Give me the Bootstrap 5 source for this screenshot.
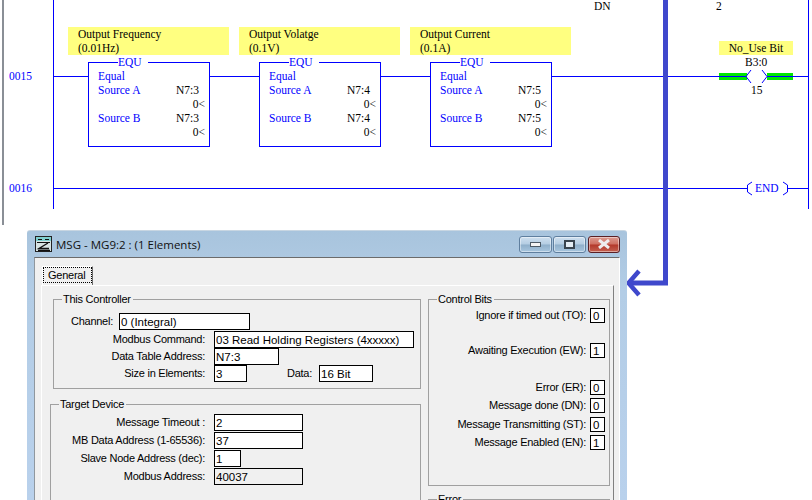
<!DOCTYPE html>
<html lang="en">
<head>
  <meta charset="UTF-8" />
  <meta name="viewport" content="width=device-width, initial-scale=1" />
  <title>MSG - MG9:2</title>
  <link href="https://cdn.jsdelivr.net/npm/bootstrap@5.3.3/dist/css/bootstrap.min.css" rel="stylesheet">
  <style>
    html, body {
      height: 500px;
      overflow: hidden;
      background-color: #fff;
    }
    /* ladder canvas */
    .ladder {
      position: relative;
      width: 812px;
      height: 500px;
      overflow: hidden;
      font-family: "Liberation Serif", serif;
      font-size: 11.5px;
      line-height: 14px;
      color: #000;
    }
    .ladder > * { position: absolute; }
    .side-bar { left: 2px; top: 0; width: 2px; height: 225px; background-color: #8a8f96; }
    .wires { left: 0; top: 0; }
    .rung-no { left: 9px; color: #0000ff; }
    .note { top: 27px; height: 28px; width: 161px; padding-left: 10px; background-color: #ffff80; }
    .eq-box {
      top: 62px;
      width: 122px;
      height: 85px;
      border: 1px solid #0000ff;
      background-color: #fff;
      color: #0000ff;
      padding: 6px 4px 0 9px;
    }
    .eq-title {
      position: absolute;
      top: -8px;
      left: 29px;
      width: 30px;
      background-color: #fff;
    }
    .eq-line { height: 14px; }
    .eq-addr { color: #000; width: 29px; }
    .eq-val { color: #000; text-align: right; }
    .plain-text { color: #000; white-space: nowrap; }
    .coil-note { left: 719px; top: 41px; width: 74px; height: 14px; background-color: #ffff80; text-align: center; }
    .end-text { left: 755px; top: 181px; color: #0000ff; }

    /* dialog window */
    .msg-window {
      left: 27px;
      top: 230px;
      width: 600px;
      height: 270px;
      overflow: hidden;
      padding: 0 7px;
      border-top: 1px solid #c8d6e2;
      border-radius: 3px 3px 0 0;
      background: linear-gradient(#a8c4dd, #b3cde6 60px, #b9d1ec);
      font-family: "Liberation Sans", sans-serif;
      font-size: 11px;
      letter-spacing: -0.25px;
      color: #000;
    }
    .title-bar { height: 26px; }
    .title-icon { margin-left: 1px; }
    .title-text { font-family: "Open Sans", sans-serif; font-size: 11.5px; letter-spacing: 0; margin-left: 4px; color: #111; padding-top: 2px; }
    .win-btn {
      width: 33px;
      height: 17px;
      padding: 0;
      border: 1px solid #5f7f9f;
      border-radius: 3px;
      background: linear-gradient(#cfe0ef, #b4cde3 48%, #8fafca 52%, #a8c6df);
      box-shadow: inset 0 0 0 1px rgba(255,255,255,.45);
    }
    .win-btn-close {
      width: 32px;
      border-color: #5a1f24;
      background: linear-gradient(#dc9a90, #cf6f60 48%, #b3382a 52%, #c4604f);
    }
    .gap-min { margin-right: 1px; }
    .gap-max { margin-right: 2px; }
    .client-area {
      height: 270px;
      background-color: #f0f0f0;
      border-top: 1px solid #6b6b6b;
      border-left: 1px solid #8f979e;
      border-right: 1px solid #fff;
      padding: 8px 0 0 6px;
    }
    .tab-head {
      width: 51px;
      height: 19px;
      margin-left: 1px;
      border: 1px solid #fff;
      border-right: 1px solid #6b6b6b;
      border-bottom: 0;
    }
    .tab-focus {
      border: 1px dotted #000;
      height: 16px;
      line-height: 14px;
      padding-left: 4px;
    }
    .tab-panel {
      width: 573px;
      height: 240px;
      border-top: 1px solid #fff;
      border-left: 1px solid #fff;
      border-right: 1px solid #808080;
      padding: 6px 2px 0 8px;
    }
    .left-col { width: 371px; }
    .right-col { width: 182px; margin-left: 7px; }
    fieldset.grp {
      border: 1px solid #a0a0a0;
      padding: 0;
      margin: 0;
      min-width: 0;
    }
    fieldset.grp legend {
      float: none;
      width: auto;
      margin: 0 0 0 8px;
      padding: 0 2px 0 1px;
      font-size: 11px;
      line-height: 14px;
    }
    fieldset.grp-controller { height: 97px; margin-left: 3px; width: 368px; }
    fieldset.grp-target { height: 140px; margin-top: 8px; width: 371px; }
    fieldset.grp-bits { height: 194px; }
    fieldset.grp-error { height: 40px; margin-top: 6px; }
    .f-row { height: 17px; }
    .f-row-tall { height: 18px; }
    .f-row-taller { height: 19px; }
    .f-lbl { text-align: right; line-height: 15px; white-space: nowrap; }
    .lbl-ctrl { width: 151px; margin-right: 9px; }
    .lbl-chan { width: 59px; margin-right: 6px; }
    .lbl-targ { width: 154px; margin-right: 9px; }
    .lbl-data { margin: 0 7px 0 40px; }
    input.dlg-input {
      height: 17px;
      min-height: 0;
      padding: 1px 0 0 1px;
      border: 1px solid #000;
      border-radius: 0;
      background-color: #fff;
      font-family: "Liberation Sans", sans-serif;
      font-size: 11.5px;
      letter-spacing: 0;
      line-height: 14px;
      color: #000;
    }
    input.dlg-input.is-static { background-color: #f0f0f0; }
    .w-chan { width: 131px; }
    .w-cmd { width: 200px; }
    .w-addr { width: 65px; }
    .w-size { width: 33px; }
    .w-bits { width: 54px; }
    .w-targ { width: 89px; }
    .w-node { width: 27px; }
    .controller-rows { margin-top: 7px; }
    .target-rows { margin-top: 2px; }
    .bit-rows { margin-top: 2px; padding-right: 4px; }
    .bit-row { height: 15px; }
    .bit-lbl { margin-right: 4px; line-height: 15px; white-space: nowrap; }
    input.bit-val { width: 15px; height: 15px; padding: 0 0 0 2px; text-align: left; }
    .after-1 { margin-bottom: 20px; }
    .after-2 { margin-bottom: 22px; }
    .after-3 { margin-bottom: 3px; }
    .after-4 { margin-bottom: 4px; }
  </style>
</head>
<body>

<div class="ladder">
  <div class="side-bar"></div>

  <!-- rails, rungs and the blue arrow -->
  <svg class="wires" width="812" height="300" xmlns="http://www.w3.org/2000/svg">
    <g stroke="#0000ff" stroke-width="1" fill="none" shape-rendering="crispEdges">
      <path d="M53.5 0V209M808.5 0V209" />
      <path d="M53 76.5H808M53 188.5H808" />
    </g>
    <rect x="719" y="73" width="74" height="7" fill="#00e600" />
    <path d="M719 76.5H746M767 76.5H808" stroke="#0000ff" fill="none" shape-rendering="crispEdges" />
    <rect x="747" y="70" width="20" height="13" fill="#fff" />
    <rect x="748" y="182" width="39" height="13" fill="#fff" />
    <path d="M751 70L746 76.5L751 83M762 70L767 76.5L762 83" stroke="#0000ff" fill="none" />
    <path d="M752 182L747.5 185V192L752 195M783 182L787.5 185V192L783 195" stroke="#0000ff" fill="none" />
    <path d="M665.5 0V283H630" stroke="#3f48cc" stroke-width="5" fill="none" />
    <path d="M639 271L628.5 283L639 295" stroke="#3f48cc" stroke-width="4.5" fill="none" />
  </svg>

  <div class="rung-no" style="top:69px">0015</div>
  <div class="rung-no" style="top:181px">0016</div>

  <div class="plain-text" style="left:594px;top:-1px">DN</div>
  <div class="plain-text" style="left:716px;top:-1px">2</div>

  <div class="note" style="left:68px">Output Frequency<br>(0.01Hz)</div>
  <div class="note" style="left:239px">Output Volatge<br>(0.1V)</div>
  <div class="note" style="left:410px">Output Current<br>(0.1A)</div>

  <div class="eq-box" style="left:88px">
    <div class="eq-title">EQU</div>
    <div class="eq-line">Equal</div>
    <div class="eq-line d-flex justify-content-between"><span>Source A</span><span class="eq-addr">N7:3</span></div>
    <div class="eq-line eq-val">0&lt;</div>
    <div class="eq-line d-flex justify-content-between"><span>Source B</span><span class="eq-addr">N7:3</span></div>
    <div class="eq-line eq-val">0&lt;</div>
  </div>
  <div class="eq-box" style="left:259px">
    <div class="eq-title">EQU</div>
    <div class="eq-line">Equal</div>
    <div class="eq-line d-flex justify-content-between"><span>Source A</span><span class="eq-addr">N7:4</span></div>
    <div class="eq-line eq-val">0&lt;</div>
    <div class="eq-line d-flex justify-content-between"><span>Source B</span><span class="eq-addr">N7:4</span></div>
    <div class="eq-line eq-val">0&lt;</div>
  </div>
  <div class="eq-box" style="left:430px">
    <div class="eq-title">EQU</div>
    <div class="eq-line">Equal</div>
    <div class="eq-line d-flex justify-content-between"><span>Source A</span><span class="eq-addr">N7:5</span></div>
    <div class="eq-line eq-val">0&lt;</div>
    <div class="eq-line d-flex justify-content-between"><span>Source B</span><span class="eq-addr">N7:5</span></div>
    <div class="eq-line eq-val">0&lt;</div>
  </div>

  <div class="coil-note">No_Use Bit</div>
  <div class="plain-text" style="left:745px;top:55px">B3:0</div>
  <div class="plain-text" style="left:751px;top:83px">15</div>
  <div class="end-text">END</div>

  <!-- MSG dialog -->
  <div class="msg-window">
    <div class="title-bar d-flex align-items-center">
      <svg class="title-icon" width="17" height="16" viewBox="0 0 17 16" xmlns="http://www.w3.org/2000/svg">
        <rect x="0.5" y="0.5" width="16" height="15" fill="#d8e4e4" stroke="#222" />
        <rect x="1" y="1" width="15" height="4" fill="#7fd0d0" />
        <path d="M3 3.5H7M10 3.5H14M2 6.5H15" stroke="#111" fill="none" />
        <path d="M13 7L4 12.5H14M3 14.5H15" stroke="#111" stroke-width="1.4" fill="none" />
      </svg>
      <span class="title-text">MSG - MG9:2 : (1 Elements)</span>
      <div class="ms-auto d-flex">
        <button type="button" class="win-btn gap-min d-flex align-items-center justify-content-center" aria-label="Minimize">
          <svg width="11" height="5" xmlns="http://www.w3.org/2000/svg"><rect x="0.5" y="0.5" width="10" height="4" fill="#f4f4f4" stroke="#4d5a66" /></svg>
        </button>
        <button type="button" class="win-btn gap-max d-flex align-items-center justify-content-center" aria-label="Maximize">
          <svg width="11" height="9" xmlns="http://www.w3.org/2000/svg"><rect x="1" y="1" width="9" height="7" fill="#e4edf4" stroke="#39444e" stroke-width="2" /></svg>
        </button>
        <button type="button" class="win-btn win-btn-close d-flex align-items-center justify-content-center" aria-label="Close">
          <svg width="14" height="10" xmlns="http://www.w3.org/2000/svg"><path d="M2 1L12 9M12 1L2 9" stroke="#eee" stroke-width="3" fill="none" /></svg>
        </button>
      </div>
    </div>

    <div class="client-area">
      <div class="tab-head"><div class="tab-focus">General</div></div>
      <div class="tab-panel d-flex">
        <div class="left-col">
          <fieldset class="grp grp-controller">
            <legend>This Controller</legend>
            <div class="controller-rows">
              <div class="f-row d-flex align-items-center"><div class="f-lbl lbl-chan">Channel:</div><input class="form-control dlg-input w-chan" value="0 (Integral)" readonly></div>
              <div class="f-row-tall d-flex align-items-center"><div class="f-lbl lbl-ctrl">Modbus Command:</div><input class="form-control dlg-input w-cmd" value="03 Read Holding Registers (4xxxxx)" readonly></div>
              <div class="f-row d-flex align-items-center"><div class="f-lbl lbl-ctrl">Data Table Address:</div><input class="form-control dlg-input w-addr" value="N7:3" readonly></div>
              <div class="f-row d-flex align-items-center"><div class="f-lbl lbl-ctrl">Size in Elements:</div><input class="form-control dlg-input w-size" value="3" readonly><div class="f-lbl lbl-data">Data:</div><input class="form-control dlg-input w-bits" value="16 Bit" readonly></div>
            </div>
          </fieldset>
          <fieldset class="grp grp-target">
            <legend>Target Device</legend>
            <div class="target-rows">
              <div class="f-row-tall d-flex align-items-center"><div class="f-lbl lbl-targ">Message Timeout :</div><input class="form-control dlg-input w-targ" value="2" readonly></div>
              <div class="f-row-tall d-flex align-items-center"><div class="f-lbl lbl-targ">MB Data Address (1-65536):</div><input class="form-control dlg-input w-targ" value="37" readonly></div>
              <div class="f-row-taller d-flex align-items-center"><div class="f-lbl lbl-targ">Slave Node Address (dec):</div><input class="form-control dlg-input w-node" value="1" readonly></div>
              <div class="f-row d-flex align-items-center"><div class="f-lbl lbl-targ">Modbus Address:</div><input class="form-control dlg-input is-static w-targ" value="40037" readonly></div>
            </div>
          </fieldset>
        </div>
        <div class="right-col">
          <fieldset class="grp grp-bits">
            <legend>Control Bits</legend>
            <div class="bit-rows">
              <div class="bit-row after-1 d-flex justify-content-end"><span class="bit-lbl">Ignore if timed out (TO):</span><input class="form-control dlg-input bit-val" value="0" readonly></div>
              <div class="bit-row after-2 d-flex justify-content-end"><span class="bit-lbl">Awaiting Execution (EW):</span><input class="form-control dlg-input bit-val" value="1" readonly></div>
              <div class="bit-row after-3 d-flex justify-content-end"><span class="bit-lbl">Error (ER):</span><input class="form-control dlg-input bit-val" value="0" readonly></div>
              <div class="bit-row after-4 d-flex justify-content-end"><span class="bit-lbl">Message done (DN):</span><input class="form-control dlg-input bit-val" value="0" readonly></div>
              <div class="bit-row after-3 d-flex justify-content-end"><span class="bit-lbl">Message Transmitting (ST):</span><input class="form-control dlg-input bit-val" value="0" readonly></div>
              <div class="bit-row d-flex justify-content-end"><span class="bit-lbl">Message Enabled (EN):</span><input class="form-control dlg-input bit-val" value="1" readonly></div>
            </div>
          </fieldset>
          <fieldset class="grp grp-error">
            <legend>Error</legend>
          </fieldset>
        </div>
      </div>
    </div>
  </div>
</div>

<script src="https://cdn.jsdelivr.net/npm/bootstrap@5.3.3/dist/js/bootstrap.bundle.min.js"></script>
</body>
</html>
